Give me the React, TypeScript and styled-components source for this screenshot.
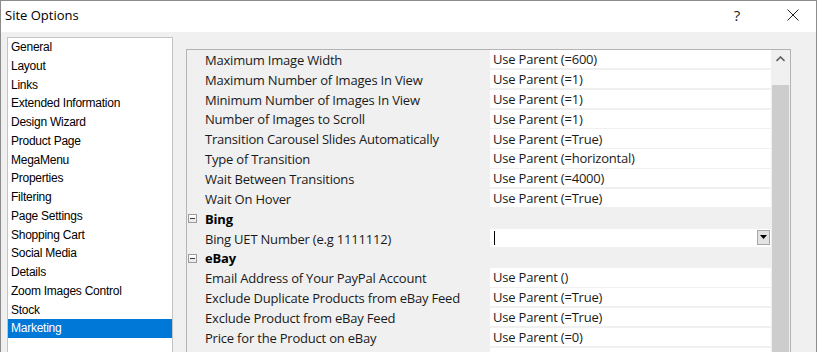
import React from "react";
import styled, { createGlobalStyle } from "styled-components";

const Global = createGlobalStyle`
  html, body { margin: 0; padding: 0; background: #f0f0f0; }
  body { width: 817px; height: 352px; overflow: hidden; }
`;

const Window = styled.div`
  width: 817px;
  height: 352px;
  box-sizing: border-box;
  border: 1px solid #8c8c8c;
  border-bottom: none;
  display: flex;
  flex-direction: column;
  background: #f0f0f0;
  overflow: hidden;
`;

const TitleBar = styled.div`
  height: 31px;
  flex: none;
  box-sizing: border-box;
  padding: 0 0 3px 4px;
  background: #ffffff;
  display: flex;
  align-items: center;
  font-family: "Open Sans", "Noto Sans", sans-serif;
  font-size: 13px;
  color: #000;
`;

const Title = styled.div`
  flex: 1;
`;

const HelpGlyph = styled.div`
  width: 14px;
  text-align: center;
  font-size: 15px;
  color: #222;
  margin-right: 42px;
`;

const CloseBox = styled.div`
  width: 14px;
  height: 14px;
  margin-right: 16px;
  display: flex;
  align-items: center;
  justify-content: center;
`;

const Body = styled.div`
  flex: 1;
  display: flex;
  align-items: flex-start;
  padding: 5px 0 0 6px;
  gap: 13px;
  min-height: 0;
`;

const ListBox = styled.div`
  width: 166px;
  height: 330px;
  box-sizing: border-box;
  border: 1px solid #c4c4c4;
  background: #ffffff;
  flex: none;
`;

const ListItem = styled.div<{ $selected?: boolean }>`
  height: 18.75px;
  line-height: 18.75px;
  padding-left: 3px;
  font-family: "Liberation Sans", Arial, sans-serif;
  font-size: 12px;
  letter-spacing: -0.25px;
  white-space: nowrap;
  color: ${(p) => (p.$selected ? "#ffffff" : "#000000")};
  background: ${(p) => (p.$selected ? "#0078d7" : "transparent")};
`;

const Grid = styled.div`
  margin-top: 12px;
  width: 605px;
  height: 320px;
  box-sizing: border-box;
  border: 1px solid #b4b4b4;
  display: flex;
  background: #f0f0f0;
  flex: none;
`;

const Rows = styled.div`
  width: 584px;
  display: flex;
  flex-direction: column;
`;

const Row = styled.div`
  height: 19.85px;
  flex: none;
  display: grid;
  grid-template-columns: 16px 287px 281px;
  font-family: "Open Sans", "Noto Sans", sans-serif;
  font-size: 13px;
  letter-spacing: -0.2px;
  color: #1a1a1a;
`;

const Margin = styled.div`
  display: flex;
  align-items: center;
  padding-left: 1px;
`;

const NameCell = styled.div<{ $bold?: boolean }>`
  padding-left: 2px;
  display: flex;
  align-items: center;
  white-space: nowrap;
  font-weight: ${(p) => (p.$bold ? 700 : 400)};
  color: ${(p) => (p.$bold ? "#000" : "#1a1a1a")};
`;

const ValueCell = styled.div`
  height: calc(100% - 1.5px);
  background: #ffffff;
  display: flex;
  align-items: center;
  padding-left: 3px;
  white-space: nowrap;
  position: relative;
`;

const Caret = styled.div`
  width: 1px;
  height: 14px;
  background: #000;
  margin-left: 1px;
`;

const DropButton = styled.div`
  position: absolute;
  right: 1px;
  top: 1px;
  width: 13px;
  height: 15px;
  box-sizing: border-box;
  border: 1px solid #a8a8a8;
  background: #e3e3e3;
  display: flex;
  align-items: center;
  justify-content: center;
`;

const MinusBox = styled.div`
  width: 9px;
  height: 9px;
  box-sizing: border-box;
  border: 1px solid #9c9c9c;
  background: linear-gradient(#ffffff, #e6e6e6);
  display: flex;
  align-items: center;
  justify-content: center;
  &::after {
    content: "";
    width: 5px;
    height: 1px;
    background: #3c3c3c;
  }
`;

const ScrollBar = styled.div`
  width: 19px;
  display: flex;
  flex-direction: column;
  background: #f0f0f0;
`;

const ScrollArrow = styled.div`
  height: 18px;
  display: flex;
  align-items: center;
  justify-content: center;
`;

const ScrollThumb = styled.div`
  margin: 17px 1px 0 1px;
  flex: 1;
  background: #cdcdcd;
`;

const listItems = [
  "General",
  "Layout",
  "Links",
  "Extended Information",
  "Design Wizard",
  "Product Page",
  "MegaMenu",
  "Properties",
  "Filtering",
  "Page Settings",
  "Shopping Cart",
  "Social Media",
  "Details",
  "Zoom Images Control",
  "Stock",
  "Marketing",
];

type GridRow =
  | { kind: "prop"; name: string; value: string }
  | { kind: "cat"; name: string }
  | { kind: "edit"; name: string };

const rows: GridRow[] = [
  { kind: "prop", name: "Maximum Image Width", value: "Use Parent (=600)" },
  { kind: "prop", name: "Maximum Number of Images In View", value: "Use Parent (=1)" },
  { kind: "prop", name: "Minimum Number of Images In View", value: "Use Parent (=1)" },
  { kind: "prop", name: "Number of Images to Scroll", value: "Use Parent (=1)" },
  { kind: "prop", name: "Transition Carousel Slides Automatically", value: "Use Parent (=True)" },
  { kind: "prop", name: "Type of Transition", value: "Use Parent (=horizontal)" },
  { kind: "prop", name: "Wait Between Transitions", value: "Use Parent (=4000)" },
  { kind: "prop", name: "Wait On Hover", value: "Use Parent (=True)" },
  { kind: "cat", name: "Bing" },
  { kind: "edit", name: "Bing UET Number (e.g 1111112)" },
  { kind: "cat", name: "eBay" },
  { kind: "prop", name: "Email Address of Your PayPal Account", value: "Use Parent ()" },
  { kind: "prop", name: "Exclude Duplicate Products from eBay Feed", value: "Use Parent (=True)" },
  { kind: "prop", name: "Exclude Product from eBay Feed", value: "Use Parent (=True)" },
  { kind: "prop", name: "Price for the Product on eBay", value: "Use Parent (=0)" },
  { kind: "prop", name: "", value: "" },
];

export default function App() {
  return (
    <>
      <Global />
      <Window>
        <TitleBar>
          <Title>Site Options</Title>
          <HelpGlyph>?</HelpGlyph>
          <CloseBox>
            <svg width="12" height="12" viewBox="0 0 12 12">
              <path d="M0.5 0.5 L11.5 11.5 M11.5 0.5 L0.5 11.5" stroke="#222" strokeWidth="1" fill="none" />
            </svg>
          </CloseBox>
        </TitleBar>
        <Body>
          <ListBox>
            {listItems.map((t) => (
              <ListItem key={t} $selected={t === "Marketing"}>
                {t}
              </ListItem>
            ))}
          </ListBox>
          <Grid>
            <Rows>
              {rows.map((r, i) => (
                <Row key={i}>
                  <Margin>{r.kind === "cat" && <MinusBox />}</Margin>
                  <NameCell $bold={r.kind === "cat"}>{r.name}</NameCell>
                  {r.kind === "prop" && <ValueCell>{r.value}</ValueCell>}
                  {r.kind === "cat" && <div />}
                  {r.kind === "edit" && (
                    <ValueCell>
                      <Caret />
                      <DropButton>
                        <svg width="7" height="4" viewBox="0 0 7 4">
                          <path d="M0 0 H7 L3.5 4 Z" fill="#000" />
                        </svg>
                      </DropButton>
                    </ValueCell>
                  )}
                </Row>
              ))}
            </Rows>
            <ScrollBar>
              <ScrollArrow>
                <svg width="9" height="6" viewBox="0 0 9 6">
                  <path d="M0.5 5 L4.5 1 L8.5 5" stroke="#606060" strokeWidth="1.6" fill="none" />
                </svg>
              </ScrollArrow>
              <ScrollThumb />
            </ScrollBar>
          </Grid>
        </Body>
      </Window>
    </>
  );
}
